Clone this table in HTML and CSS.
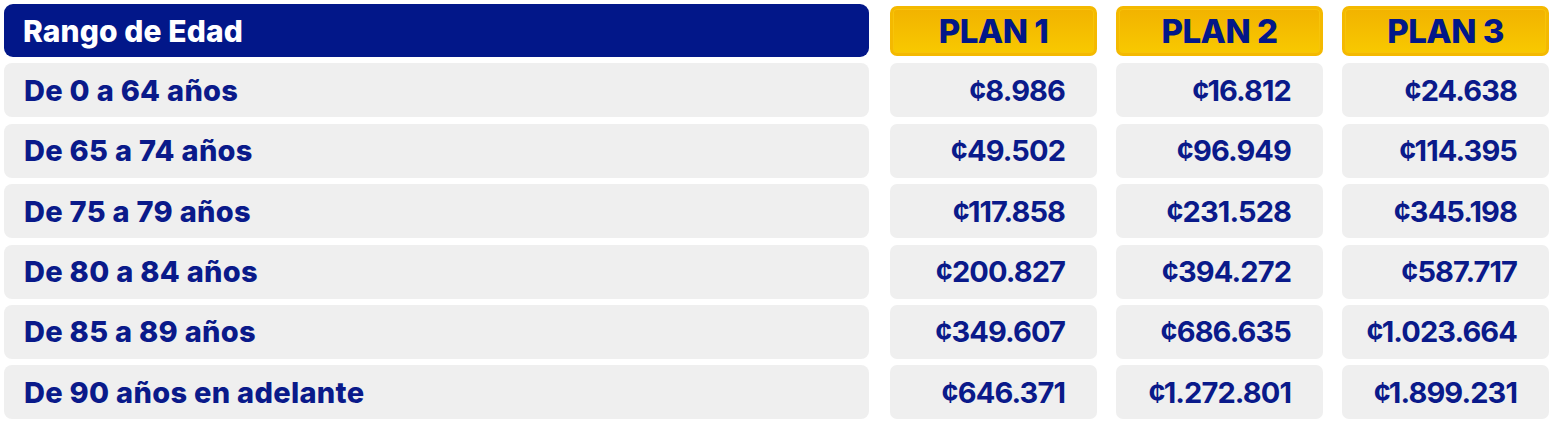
FILE: index.html
```html
<!DOCTYPE html>
<html lang="es">
<head>
<meta charset="utf-8">
<title>Tarifas por rango de edad</title>
<link rel="stylesheet" href="styles.css">
</head>
<body>
<div class="table">
  <div class="head-age">Rango de Edad</div>
  <div class="head-plan">PLAN 1</div>
  <div class="head-plan">PLAN 2</div>
  <div class="head-plan">PLAN 3</div>

  <div class="age">De 0 a 64 años</div>
  <div class="price">¢8.986</div>
  <div class="price">¢16.812</div>
  <div class="price">¢24.638</div>

  <div class="age">De 65 a 74 años</div>
  <div class="price">¢49.502</div>
  <div class="price">¢96.949</div>
  <div class="price">¢114.395</div>

  <div class="age">De 75 a 79 años</div>
  <div class="price">¢117.858</div>
  <div class="price">¢231.528</div>
  <div class="price">¢345.198</div>

  <div class="age">De 80 a 84 años</div>
  <div class="price">¢200.827</div>
  <div class="price">¢394.272</div>
  <div class="price">¢587.717</div>

  <div class="age">De 85 a 89 años</div>
  <div class="price">¢349.607</div>
  <div class="price">¢686.635</div>
  <div class="price">¢1.023.664</div>

  <div class="age">De 90 años en adelante</div>
  <div class="price">¢646.371</div>
  <div class="price">¢1.272.801</div>
  <div class="price">¢1.899.231</div>
</div>
</body>
</html>
```
FILE: styles.css
```css
html, body {
  margin: 0;
  padding: 0;
  background: #ffffff;
}
body {
  font-family: Inter, "Liberation Sans", sans-serif;
}
.table {
  display: grid;
  grid-template-columns: 867px 207px 207px 207px;
  grid-auto-rows: 54px;
  column-gap: 19px;
  row-gap: 6.4px;
  padding: 3px 0 0 4px;
}
.head-age {
  margin: 1px 2px 0 0;
  background: #021789;
  border-radius: 9px;
  color: #ffffff;
  font-weight: 800;
  font-size: 30px;
  letter-spacing: 0.1px;
  display: flex;
  align-items: center;
  padding-left: 19px;
}
.head-plan {
  margin: 3px 0 1px;
  border: 3px solid #f4b900;
  border-radius: 7px;
  background: linear-gradient(#f2b300, #f8c900);
  box-shadow: inset 0 0 0 1px #f7c40a;
  color: #021789;
  font-weight: 800;
  font-size: 33px;
  letter-spacing: -0.5px;
  display: flex;
  align-items: center;
  justify-content: center;
}
.age {
  margin-right: 2px;
  background: #efefef;
  border-radius: 8px;
  color: #0a1a8a;
  font-weight: 800;
  font-size: 29px;
  letter-spacing: 0.3px;
  display: flex;
  align-items: center;
  padding-left: 20px;
}
.price {
  background: #efefef;
  border-radius: 7px;
  color: #0a1a8a;
  font-weight: 700;
  font-size: 29px;
  letter-spacing: -0.9px;
  display: flex;
  align-items: center;
  justify-content: flex-end;
  padding-right: 32px;
}
```
